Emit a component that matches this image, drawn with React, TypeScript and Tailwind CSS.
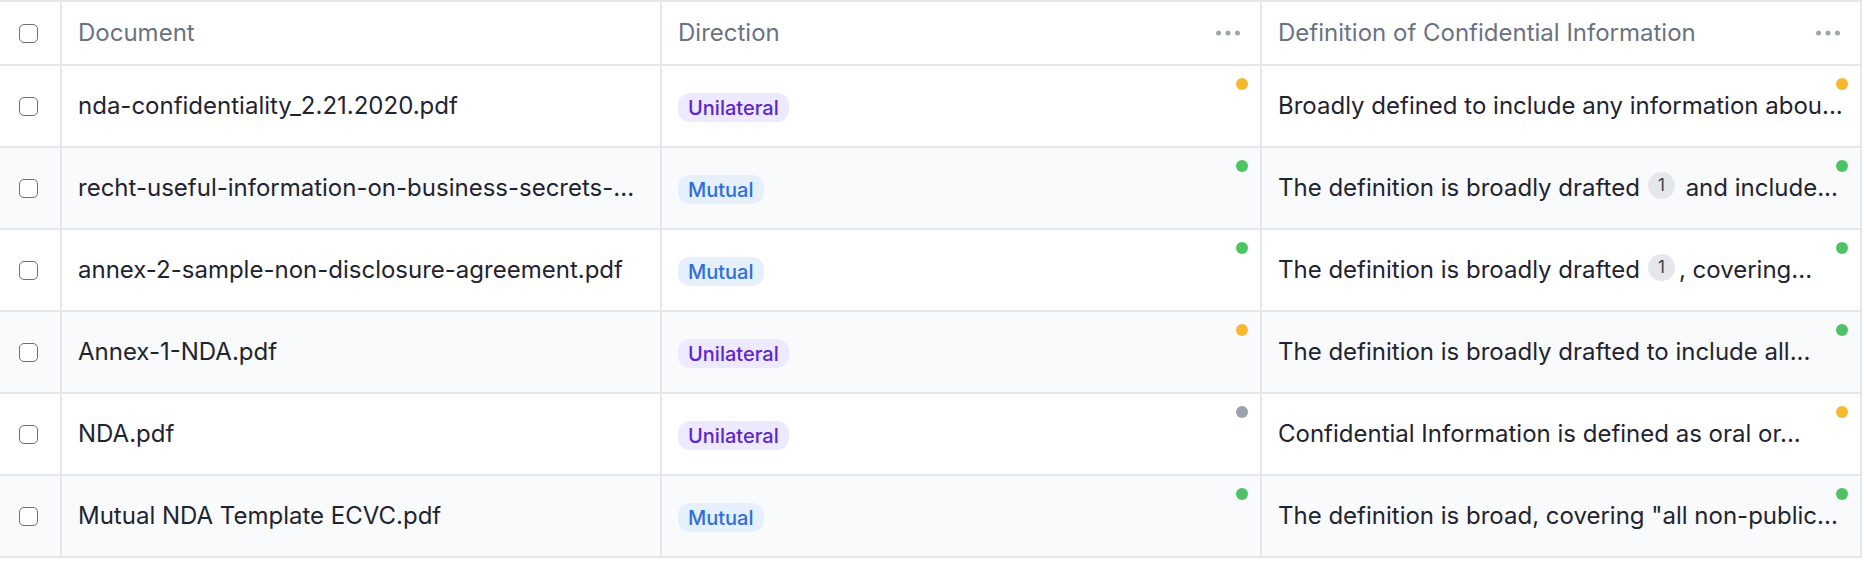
import React from "react";

type Dot = "yellow" | "green" | "gray";

type Row = {
  doc: string;
  direction: "Unilateral" | "Mutual";
  dirDot: Dot;
  defBefore: string;
  cite?: number;
  defAfter?: string;
  defDot: Dot;
};

const ROWS: Row[] = [
  {
    doc: "nda-confidentiality_2.21.2020.pdf",
    direction: "Unilateral",
    dirDot: "yellow",
    defBefore: "Broadly defined to include any information abou...",
    defDot: "yellow",
  },
  {
    doc: "recht-useful-information-on-business-secrets-...",
    direction: "Mutual",
    dirDot: "green",
    defBefore: "The definition is broadly drafted",
    cite: 1,
    defAfter: " and include...",
    defDot: "green",
  },
  {
    doc: "annex-2-sample-non-disclosure-agreement.pdf",
    direction: "Mutual",
    dirDot: "green",
    defBefore: "The definition is broadly drafted",
    cite: 1,
    defAfter: ", covering...",
    defDot: "green",
  },
  {
    doc: "Annex-1-NDA.pdf",
    direction: "Unilateral",
    dirDot: "yellow",
    defBefore: "The definition is broadly drafted to include all...",
    defDot: "green",
  },
  {
    doc: "NDA.pdf",
    direction: "Unilateral",
    dirDot: "gray",
    defBefore: "Confidential Information is defined as oral or...",
    defDot: "yellow",
  },
  {
    doc: "Mutual NDA Template ECVC.pdf",
    direction: "Mutual",
    dirDot: "green",
    defBefore: 'The definition is broad, covering "all non-public...',
    defDot: "green",
  },
];

const dotClass: Record<Dot, string> = {
  yellow: "bg-[#f5b82e]",
  green: "bg-[#4ec265]",
  gray: "bg-[#9ca3af]",
};

const Checkbox = () => (
  <span className="block w-[19px] h-[19px] rounded-[5px] border-[1.5px] border-[#6b6f76] bg-white" />
);

const MoreDots = () => (
  <svg width="24" height="6" viewBox="0 0 24 6" className="text-[#a0a4ad]">
    <circle cx="2.5" cy="3" r="2.5" fill="currentColor" />
    <circle cx="12" cy="3" r="2.5" fill="currentColor" />
    <circle cx="21.5" cy="3" r="2.5" fill="currentColor" />
  </svg>
);

const StatusDot = ({ color }: { color: Dot }) => (
  <span className={`absolute top-3 right-3 w-3 h-3 rounded-full ${dotClass[color]}`} />
);

const DirectionBadge = ({ value }: { value: Row["direction"] }) => (
  <span
    className={`inline-flex items-center h-[29px] px-[10px] rounded-[12px] text-[20px] font-medium ${
      value === "Unilateral" ? "bg-[#ede9fe] text-[#6025c9]" : "bg-[#e6effc] text-[#2e6fd9]"
    }`}
  >
    {value}
  </span>
);

export default function App() {
  return (
    <div className="w-[1864px] min-h-[564px] bg-white font-['Inter','Noto_Sans',sans-serif] text-[24px] text-[#1f2430]">
      <div className="w-[1862px] border-t-2 border-[#e5e7eb]">
        {/* Header */}
        <div className="flex h-[64px] border-b-2 border-[#e5e7eb] text-[#6b7280]">
          <div className="w-[62px] border-r-2 border-[#e5e7eb] flex items-center pl-[19px]">
            <Checkbox />
          </div>
          <div className="w-[600px] border-r-2 border-[#e5e7eb] flex items-center px-4">Document</div>
          <div className="w-[600px] border-r-2 border-[#e5e7eb] flex items-center justify-between pl-4 pr-5">
            <span>Direction</span>
            <MoreDots />
          </div>
          <div className="w-[600px] border-r-2 border-[#e5e7eb] flex items-center justify-between pl-4 pr-5">
            <span>Definition of Confidential Information</span>
            <MoreDots />
          </div>
        </div>

        {/* Rows */}
        {ROWS.map((row, i) => (
          <div
            key={row.doc}
            className={`flex h-[82px] border-b-2 border-[#e5e7eb] ${i % 2 === 1 ? "bg-[#f9fafb]" : "bg-white"}`}
          >
            <div className="w-[62px] border-r-2 border-[#e5e7eb] flex items-center pl-[19px]">
              <Checkbox />
            </div>
            <div className="w-[600px] border-r-2 border-[#e5e7eb] flex items-center pl-4 pr-1">
              <span className="whitespace-nowrap">{row.doc}</span>
            </div>
            <div className="relative w-[600px] border-r-2 border-[#e5e7eb] flex items-center pl-4 pt-[3px]">
              <DirectionBadge value={row.direction} />
              <StatusDot color={row.dirDot} />
            </div>
            <div className="relative w-[600px] border-r-2 border-[#e5e7eb] flex items-center pl-4 pr-3">
              <span className="whitespace-nowrap">
                {row.defBefore}
                {row.cite !== undefined && (
                  <span className="relative -top-[4px] inline-flex items-center justify-center w-[27px] h-[27px] ml-2 mr-1 rounded-full bg-[#e5e7eb] text-[17px] text-[#374151] align-middle">
                    {row.cite}
                  </span>
                )}
                {row.defAfter}
              </span>
              <StatusDot color={row.defDot} />
            </div>
          </div>
        ))}
      </div>
    </div>
  );
}
